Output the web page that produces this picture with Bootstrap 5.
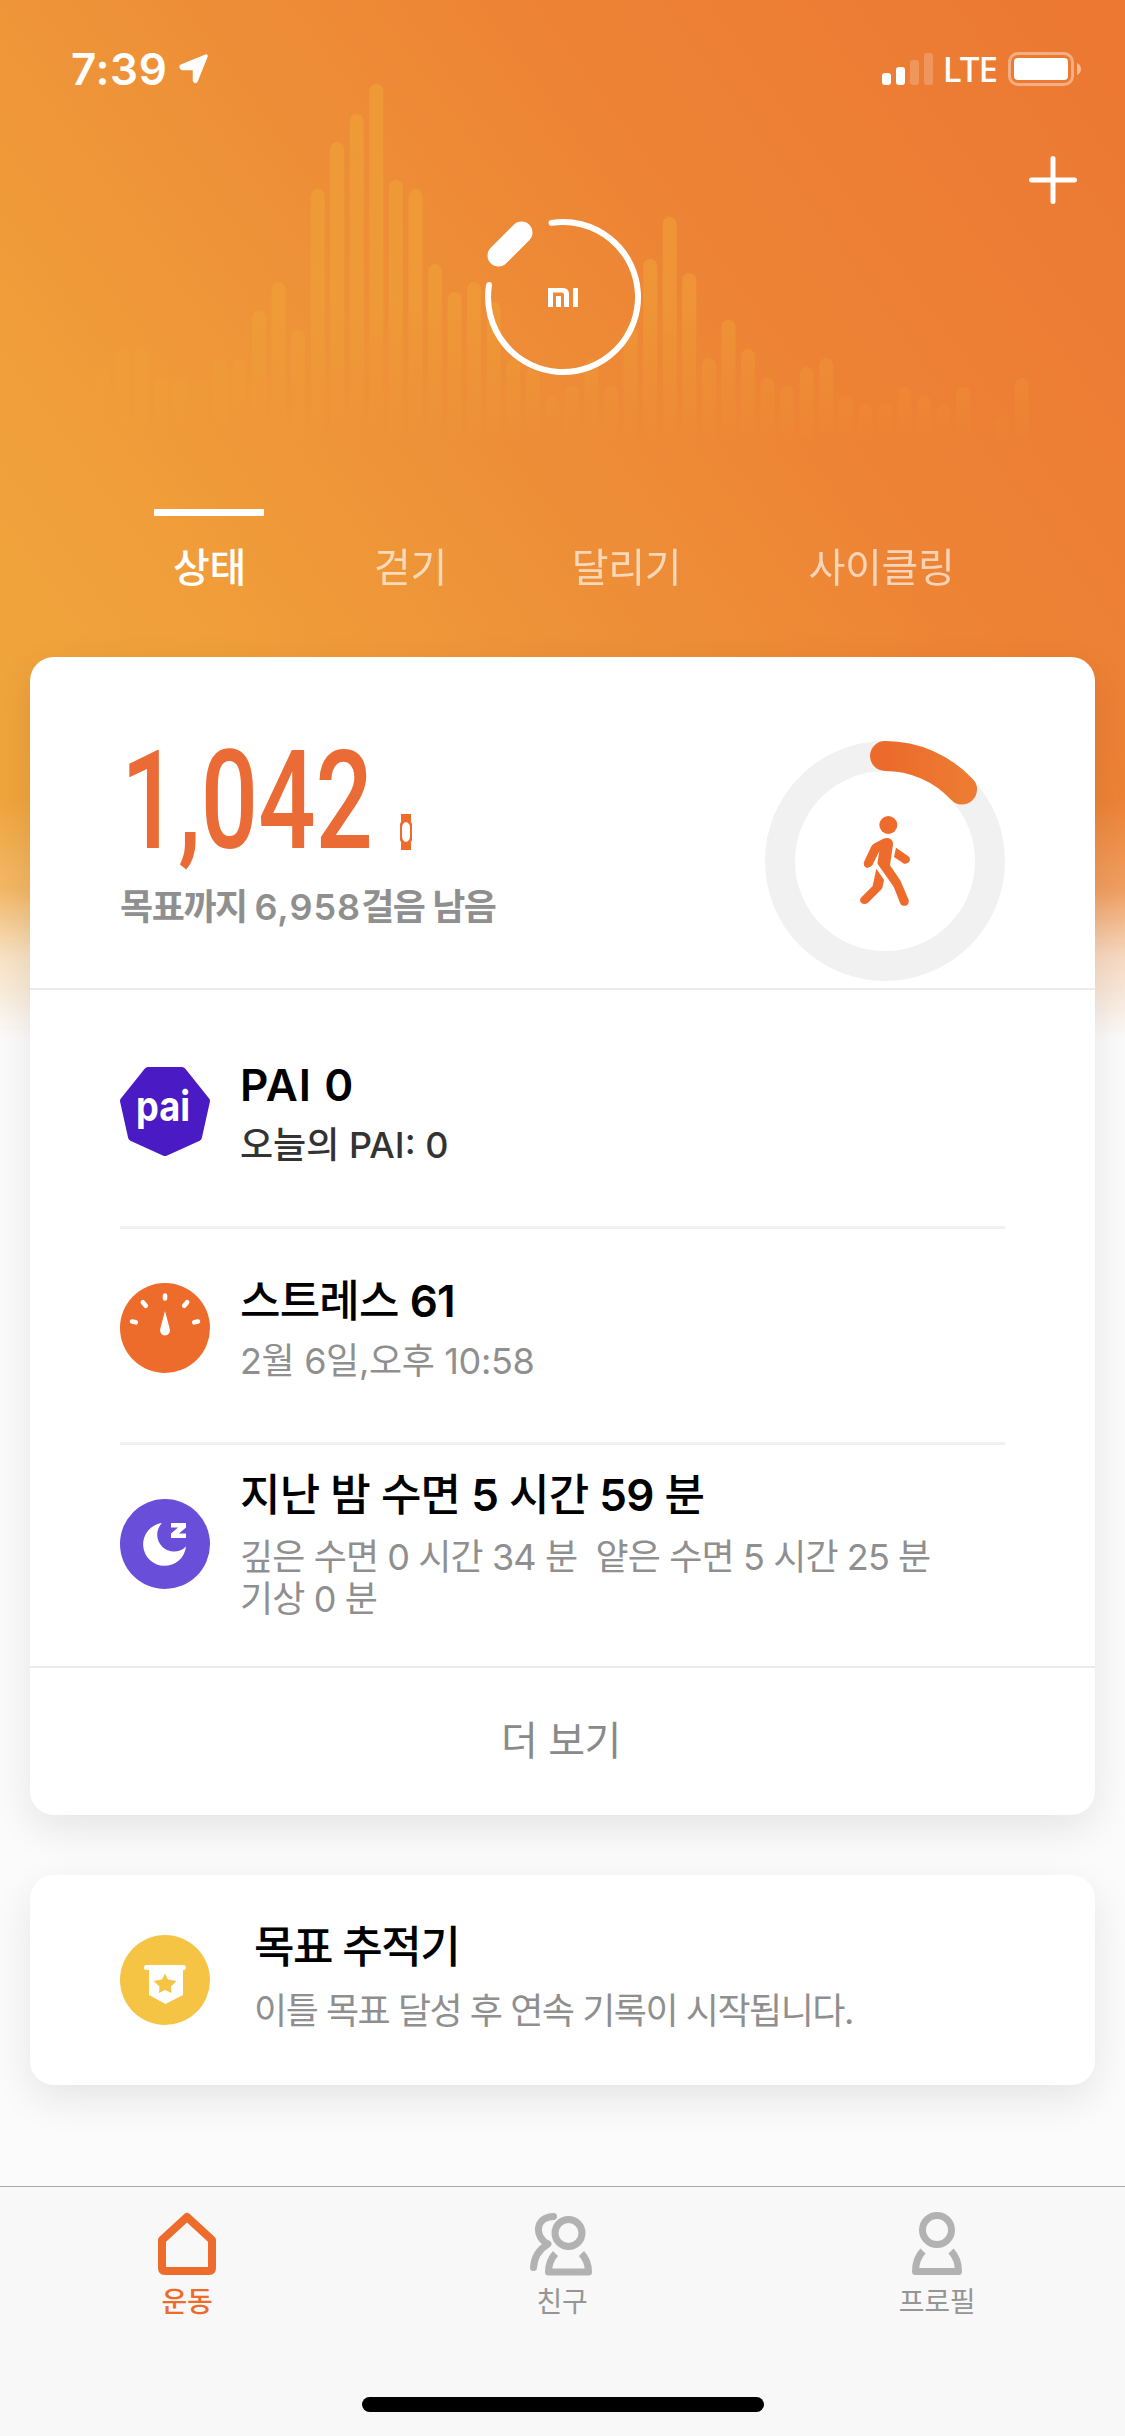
<!DOCTYPE html>
<html lang="ko">
<head>
<meta charset="utf-8">
<meta name="viewport" content="width=device-width, initial-scale=1">
<title>Mi Fit</title>
<link rel="stylesheet" href="https://cdn.jsdelivr.net/npm/bootstrap@5.3.0/dist/css/bootstrap.min.css">
<style>
  body{width:1125px;height:2436px;overflow:hidden;background:#fbfbfb;font-family:Inter,"Noto Sans CJK KR",sans-serif;color:#000}
  svg{display:block;flex:none}
  .hero-bg{position:absolute;inset:0 0 auto 0;height:1060px;background:linear-gradient(54deg,#f0a53c 12%,#f09e3a 28%,#ee9238 45%,#ed8235 70%,#ec7832 98%);
    -webkit-mask-image:linear-gradient(#000 800px,rgba(0,0,0,.78) 890px,rgba(0,0,0,.3) 955px,transparent 1040px);mask-image:linear-gradient(#000 800px,rgba(0,0,0,.78) 890px,rgba(0,0,0,.3) 955px,transparent 1040px)}
  .statusbar{height:138px;padding:0 43px 0 71px}
  .clock{font-size:44px;font-weight:600;line-height:50px;letter-spacing:.6px}
  .net{font:500 35px/40px "Noto Sans",sans-serif;letter-spacing:-1px}
  .addrow{height:66px;padding-right:48px;padding-top:18px}
  .device{height:305px;padding-top:11px}
  .tabline{height:148px;letter-spacing:-.3px}
  .tabline .nav-link{font-size:40px;line-height:44px;padding:30px 0 0 1px;color:#fff;border-top:7px solid transparent;border-radius:0;opacity:.65;text-align:center}
  .tabline .nav-link.active{opacity:1;border-color:#fff;font-weight:500}
  .panel{margin:0 30px;border:0;border-radius:24px;box-shadow:0 14px 40px rgba(0,0,0,.09)}
  .summary{height:333px;border-bottom:2px solid #ebebeb;padding:84px 90px 0 90px}
  .steps{font:500 137px/137px Roboto,sans-serif;color:#ea6b36;transform-origin:0 0;transform:scaleX(.736);width:320px;margin:-8px 0 0 1px;white-space:nowrap}
  .t-big{font-size:44px;font-weight:500;line-height:50px;white-space:nowrap;padding-top:1px}
  .t-big b{font-weight:600}
  .t-sub{font-size:36px;line-height:42px;color:#8f8f8f;white-space:nowrap}
  .entry{margin:0 90px;border-bottom:3px solid #f1f1f1}
  .more{height:147px;font-size:40px;color:#8a8a8a;border-top:2px solid #ebebeb;letter-spacing:-.4px;padding-right:3px}
  .ls-goal{letter-spacing:-1.43px}.ls-goal span{letter-spacing:1px}.ls-pai{letter-spacing:1px}
  .ls-stress{letter-spacing:-.35px}.ls-title{letter-spacing:-.8px}
  .ls-sleep{letter-spacing:-.9px}.ls-track{letter-spacing:-1.47px}
  .tabbar{height:250px;background:#f8f8f8;border-top:1px solid #a8a8a8}
  .tabbar .nav-link{width:375px;padding:25px 1px 0 0;font-size:28px;line-height:34px;color:#959595;letter-spacing:-.3px}
  .tabbar .nav-link.active{color:#ed6b2b}
  .homebar{width:402px;height:15px;border-radius:8px;background:#000}
</style>
</head>
<body class="position-relative">
<div class="hero-bg">
  <svg width="1125" height="460">
    <defs><linearGradient id="wave" x1="0" y1="84" x2="0" y2="445" gradientUnits="userSpaceOnUse">
      <stop offset="0" stop-color="#f0a437" stop-opacity=".6"/><stop offset=".6" stop-color="#f0a437" stop-opacity=".5"/><stop offset="1" stop-color="#f0a437" stop-opacity="0"/></linearGradient></defs>
    <g id="bars" fill="url(#wave)"></g>
  </svg>
</div>

<div class="position-relative d-flex flex-column h-100">
  <header class="text-white">
    <div class="statusbar d-flex align-items-center justify-content-between">
      <div class="d-flex align-items-center">
        <span class="clock">7:39</span>
        <svg width="30" height="30" viewBox="0 0 30 30" style="margin-left:12px"><path d="M2.500 12 27 2 17 27Q16 28 15.500 26.500V14.500H3.500Q1.500 13.500 2.500 12Z" fill="#fff" stroke="#fff" stroke-width="3.500" stroke-linejoin="round"/></svg>
      </div>
      <div class="d-flex align-items-center">
        <svg width="51" height="32"><g fill="#fff"><rect y="20" width="9" height="12" rx="3"/><rect x="14" y="14" width="9" height="18" rx="3"/><g opacity=".2"><rect x="28" y="7" width="9" height="25" rx="3"/><rect x="42" width="9" height="32" rx="3"/></g></g></svg>
        <span class="net" style="margin-left:10px">LTE</span>
        <svg width="74" height="34" style="margin-left:11px"><rect x="1.500" y="1.500" width="63" height="31" rx="8.500" fill="none" stroke="#fff" stroke-width="3" opacity=".4"/><rect x="6" y="6" width="54" height="22" rx="4" fill="#fff"/><path d="M69 11Q73 13 73 17T69 23Z" fill="#fff" opacity=".5"/></svg>
      </div>
    </div>
    <div class="addrow d-flex justify-content-end">
      <svg width="48" height="48"><path d="M24 2.500V45.500M2.500 24H45.500" stroke="#fff" stroke-width="5" stroke-linecap="round"/></svg>
    </div>
    <div class="device d-flex justify-content-center">
      <svg width="160" height="166" viewBox="483 215 160 166">
        <path d="M551.500 222.900A75 75 0 1 1 489 285" fill="none" stroke="#fff" stroke-width="6" stroke-linecap="round"/>
        <path d="M498.500 255.500 521.500 232.500" stroke="#fff" stroke-width="22" stroke-linecap="round"/>
        <path d="M548 307V288H563Q569 288 569 294V307H564V295Q564 292.500 561.500 292.500H553V307ZM556 296H561V307H556ZM573 288H578V307H573Z" fill="#fff"/>
      </svg>
    </div>
    <nav class="nav tabline flex-nowrap" style="padding-left:154px">
      <a class="nav-link active" style="width:110px">상태</a>
      <a class="nav-link" style="width:110px;margin-left:91px">걷기</a>
      <a class="nav-link" style="width:148px;margin-left:87px">달리기</a>
      <a class="nav-link" style="width:184px;margin-left:89px">사이클링</a>
    </nav>
  </header>

  <main>
    <section class="card panel" style="height:1158px">
      <div class="summary d-flex justify-content-between">
        <div>
          <div class="d-flex" style="height:137px">
            <div class="steps">1,042</div>
            <svg width="12" height="36" viewBox="0 0 12 36" style="margin:73px 0 0 -41px"><path fill-rule="evenodd" d="M1 0H11V8L12 10V26L11 28V36H1V28L0 26V10L1 8ZM6 8Q2 9 2 14V22Q2 27 6 28Q10 27 10 22V14Q10 9 6 8Z" fill="#ed6b2b"/></svg>
          </div>
          <div class="t-sub fw-semibold ls-goal" style="margin-top:8px">목표까지 <span>6,958</span>걸음 남음</div>
        </div>
        <svg width="240" height="240" viewBox="0 0 240 240">
          <defs><linearGradient id="arc"><stop offset="0" stop-color="#ec6a2b"/><stop offset="1" stop-color="#ed7b32"/></linearGradient></defs>
          <circle cx="120" cy="120" r="105" fill="none" stroke="#f1f1f1" stroke-width="30"/>
          <path d="M120 15A105 105 0 0 1 197 48.500" fill="none" stroke="url(#arc)" stroke-width="30" stroke-linecap="round"/>
          <g transform="translate(-25 -31) scale(.33333)" fill="#ed6b2b">
            <circle cx="445" cy="345" r="27"/>
            <path d="M398 404Q403 400 430 386Q438 382 447 385Q460 390 459 404L450 466L480 510Q484 517 486 523L506 570Q508 582 498 587Q485 590 480 578L461 530L413 462Q412 458 413 454L418 424L397 466Q390 475 379 473Q369 468 372 456L393 411Q395 406 398 404Z"/>
            <path d="M468 413 504 438Q512 444 509 453Q504 463 492 461L462 441ZM409 476 432 509 428 530Q427 535 423 539L384 578Q374 586 364 579Q357 571 363 563L398 528Z"/>
          </g>
        </svg>
      </div>

      <div class="entry d-flex" style="height:239px;padding-top:77px">
        <svg width="90" height="90" viewBox="0 0 90 90"><path d="M28 4H62L86 34 78 70 45 85 12 70 4 34Z" fill="#4a1ac4" stroke="#4a1ac4" stroke-width="8" stroke-linejoin="round"/>
          <text x="16" y="54" font-family="Inter, sans-serif" font-weight="700" font-size="41" textLength="54" lengthAdjust="spacingAndGlyphs" fill="#fff">pai</text></svg>
        <div style="margin:-8px 0 0 30px">
          <div class="t-big ls-pai fw-semibold">PAI 0</div>
          <div class="t-sub" style="margin-top:14px;color:#333;font-weight:500">오늘의 PAI: 0</div>
        </div>
      </div>

      <div class="entry d-flex" style="height:216px;padding-top:54px">
        <svg width="90" height="90" viewBox="0 0 90 90"><circle cx="45" cy="45" r="45" fill="#ed6b2b"/>
          <path d="M45 12.500V15.500M22.800 19.200 25.800 22.800M67.200 19.200 64.200 22.800M12 38.500 15.800 39.300M78 38.500 74.200 39.300" stroke="#fff" stroke-width="4.600" stroke-linecap="round"/>
          <path d="M45 28 49.800 46A5 5 0 1 1 40.200 46Z" fill="#fff"/></svg>
        <div style="margin:-8px 0 0 30px">
          <div class="t-big ls-title">스트레스 <b>61</b></div>
          <div class="t-sub ls-stress" style="margin-top:14px">2월 6일,오후 10:58</div>
        </div>
      </div>

      <div class="d-flex" style="height:221px;padding:54px 90px 0">
        <svg width="90" height="90" viewBox="0 0 90 90"><circle cx="45" cy="45" r="45" fill="#684ed9"/>
          <path d="M42 24A21.500 21.500 0 1 0 66 47.500A16 16 0 0 1 42 24Z" fill="#fff"/>
          <path d="M51 24H66V28.500L59 34.500H66V39H51V34.500L58 28.500H51Z" fill="#fff"/></svg>
        <div style="margin:-30px 0 0 30px">
          <div class="t-big ls-title">지난 밤 수면 <b>5</b> 시간 <b>59</b> 분</div>
          <div class="t-sub ls-sleep" style="margin-top:16px">깊은 수면 0 시간 34 분&nbsp; 얕은 수면 5 시간 25 분<br>기상 0 분</div>
        </div>
      </div>

      <div class="more d-flex align-items-center justify-content-center">더 보기</div>
    </section>

    <section class="card panel flex-row" style="height:210px;margin-top:60px;padding:60px 90px 0">
      <svg width="90" height="90" viewBox="0 0 90 90"><circle cx="45" cy="45" r="45" fill="#f5c445"/>
        <path d="M26 30H64Q66 30 66 32.500T64 35H63V60L45.500 69 29 60V35H26Q24 35 24 32.500T26 30Z" fill="#fff"/>
        <path d="M45 38.500 48 44.500 56.500 46 51 51.500 51.500 58 45 55 39 58 39.500 51.500 33.500 46 42 44.500Z" fill="#f5c445"/></svg>
      <div style="margin:-14px 0 0 44px">
        <div class="t-big ls-track">목표 추적기</div>
        <div class="t-sub ls-track" style="margin-top:18px">이틀 목표 달성 후 연속 기록이 시작됩니다.</div>
      </div>
    </section>
  </main>

  <footer class="tabbar mt-auto d-flex flex-column">
    <nav class="nav flex-nowrap">
      <a class="nav-link active d-flex flex-column align-items-center">
        <svg width="64" height="64" viewBox="155 2212 64 64"><path d="M187 2217 212 2240V2268Q212 2271 209 2271H165Q162 2271 162 2268V2240Z" fill="none" stroke="#ed6b2b" stroke-width="8" stroke-linejoin="round"/></svg>
        <span style="margin-top:9px;font-weight:500">운동</span></a>
      <a class="nav-link d-flex flex-column align-items-center">
        <svg width="64" height="64" viewBox="530 2212 64 64" fill="none" stroke="#b2b2b2" stroke-width="7"><circle cx="568.500" cy="2233" r="13.500"/><path d="M555.500 2253.500Q548.500 2261 548.500 2272H588.500Q588.500 2261 581.500 2253.500" stroke-linejoin="round"/><path d="M553.500 2216.500C535 2217 534 2237 548 2244C538 2250 534 2258 533.500 2267.500" stroke-linecap="round" stroke-linejoin="round"/></svg>
        <span style="margin-top:9px">친구</span></a>
      <a class="nav-link d-flex flex-column align-items-center">
        <svg width="64" height="64" viewBox="905 2212 64 64" fill="none" stroke="#b2b2b2" stroke-width="7"><circle cx="937" cy="2230" r="14.500"/><path d="M923 2251Q915.500 2259 915.500 2271.500H958.500Q958.500 2259 951 2251" stroke-linejoin="round"/></svg>
        <span style="margin-top:9px">프로필</span></a>
    </nav>
    <div class="homebar mx-auto mt-auto" style="margin-bottom:24px"></div>
  </footer>
</div>

<script src="https://cdn.jsdelivr.net/npm/bootstrap@5.3.0/dist/js/bootstrap.bundle.min.js"></script>
<script>
  // Top edge of each wave bar, left to right; 0 leaves a gap.
  const tops = [367,349,349,378,378,380,359,359,311,282,330,189,142,114,84,180,189,264,292,282,302,359,367,396,386,359,386,327,259,217,273,358,320,349,378,386,367,358,396,404,404,387,396,405,387,0,416,378];
  document.getElementById('bars').innerHTML = tops.map((t, i) =>
    t ? `<rect x="${(95.5 + i * 19.56).toFixed(1)}" y="${t}" width="14" height="${440 - t}" rx="7"/>` : '').join('');
</script>
</body>
</html>
